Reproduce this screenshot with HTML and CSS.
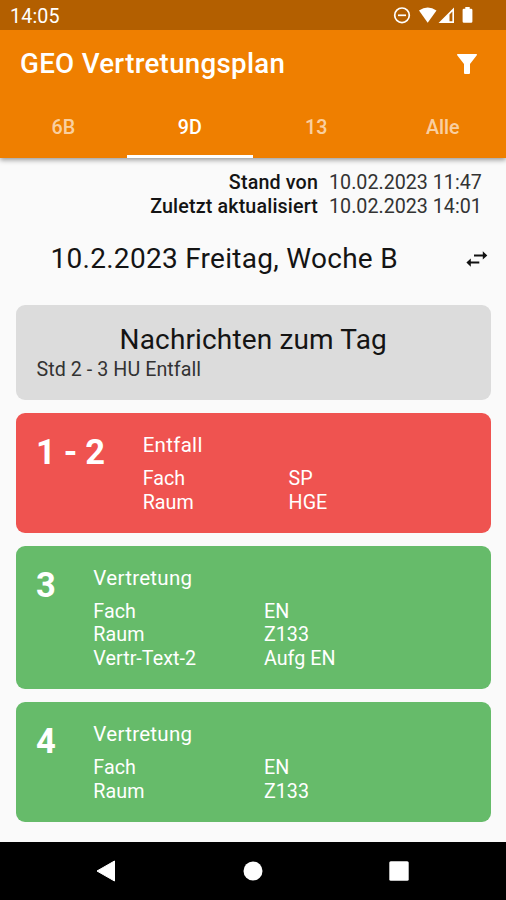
FILE: index.html
```html
<!DOCTYPE html>
<html lang="de">
<head>
<meta charset="utf-8">
<title>GEO Vertretungsplan</title>
<link rel="stylesheet" href="styles.css">
</head>
<body>
<header class="top">
  <div class="status">
    <span class="clock">14:05</span>
    <svg class="status-icons" width="82" height="20" viewBox="0 0 82 20">
      <g fill="none" stroke="#fff" stroke-width="1.7"><circle cx="9" cy="10.3" r="7.3"/><path d="M5 10.3h8"/></g>
      <path fill="#fff" d="M26 5.400Q34.700 -.6 43.500 5.400L34.700 17.700Z"/>
      <path fill="#fff" fill-rule="evenodd" d="M45.500 18 61 2.500V18ZM56.500 9.500V16.300H59.400V6.600Z"/>
      <path fill="#fff" d="M72.300 1.900h4.400v1.800h1.400q1.300 0 1.300 1.300v11.500q0 1.300-1.300 1.300h-7.200q-1.300 0-1.300-1.300V5q0-1.300 1.300-1.300h1.400Z"/>
    </svg>
  </div>
  <div class="appbar">
    <h1 class="title">GEO Vertretungsplan</h1>
    <svg class="filter" width="20" height="20" viewBox="0 0 20 20"><path fill="#fff" d="M.6 0H19.400Q20.500.6 19.600 1.600L13 10V19q0 1-1 1H8q-1 0-1-1V10L.4 1.600Q-.5.6.6 0Z"/></svg>
  </div>
  <nav class="tabs">
    <span class="tab">6B</span>
    <span class="tab active">9D</span>
    <span class="tab">13</span>
    <span class="tab">Alle</span>
  </nav>
</header>
<main class="content">
  <div class="stamps">
    <b>Stand von</b><span>10.02.2023 11:47</span>
    <b>Zuletzt aktualisiert</b><span>10.02.2023 14:01</span>
  </div>
  <div class="day">
    <h2 class="date">10.2.2023 Freitag, Woche B</h2>
    <svg class="swap" width="22" height="16" viewBox="0 0 22 16"><path fill="#111" d="M8 3.400H16.800V.2L21.300 4.400 16.800 8.600V5.400H8ZM13.300 10.600H4.800V7.400L.4 11.600 4.800 15.800V12.600H13.300Z"/></svg>
  </div>
  <section class="card news">
    <h3 class="news-title">Nachrichten zum Tag</h3>
    <p class="news-text">Std 2 - 3 HU Entfall</p>
  </section>
  <section class="card red">
    <div class="hour">1 - 2</div>
    <div class="info">
      <div class="kind">Entfall</div>
      <div class="rows"><span>Fach</span><span>SP</span><span>Raum</span><span>HGE</span></div>
    </div>
  </section>
  <section class="card green">
    <div class="hour">3</div>
    <div class="info">
      <div class="kind">Vertretung</div>
      <div class="rows"><span>Fach</span><span>EN</span><span>Raum</span><span>Z133</span><span>Vertr-Text-2</span><span>Aufg EN</span></div>
    </div>
  </section>
  <section class="card green">
    <div class="hour">4</div>
    <div class="info">
      <div class="kind">Vertretung</div>
      <div class="rows"><span>Fach</span><span>EN</span><span>Raum</span><span>Z133</span></div>
    </div>
  </section>
</main>
<footer class="navbar">
  <svg width="20" height="22" viewBox="0 0 20 22"><path fill="#fff" d="M18.500 1V21L1 11Z" stroke="#fff" stroke-width="1" stroke-linejoin="round"/></svg>
  <svg width="20" height="20" viewBox="0 0 20 20"><circle cx="10" cy="10" r="9.500" fill="#fff"/></svg>
  <svg width="20" height="20" viewBox="0 0 20 20"><rect x=".3" y=".3" width="19.400" height="19.400" rx="1.500" fill="#fff"/></svg>
</footer>
</body>
</html>
```
FILE: styles.css
```css
* { box-sizing: border-box; }
body {
  margin: 0;
  width: 506px;
  height: 900px;
  overflow: hidden;
  display: flex;
  flex-direction: column;
  background: #fafafa;
  color: #141414;
  font-family: Roboto, "Liberation Sans", sans-serif;
  font-size: 19.7px;
  line-height: 23.5px;
}
h1, h2, h3, p { margin: 0; font-weight: 400; }
svg { display: block; flex: none; }
.top {
  height: 158px;
  flex: none;
  background: #ef7f00;
  color: #fff;
  box-shadow: 0 2px 5px rgba(0, 0, 0, .4);
}
.status {
  height: 30px;
  padding: 4px 31px 0 10px;
  background: #b35f00;
  display: flex;
  justify-content: space-between;
  align-items: center;
}
.status-icons { margin-top: -5px; }
.clock { font-size: 19.7px; font-weight: 400; letter-spacing: .15px; }
.appbar {
  height: 68px;
  padding: 0 29px 0 20px;
  display: flex;
  justify-content: space-between;
  align-items: center;
}
.title { font-size: 27.7px; line-height: 34px; font-weight: 500; letter-spacing: .3px; }
.tabs { height: 60px; display: grid; grid-template-columns: repeat(4, 1fr); }
.tab {
  padding-top: 18px;
  text-align: center;
  font-size: 19.7px;
  font-weight: 500;
  color: rgba(255, 255, 255, .65);
}
.active { color: #fff; border-bottom: 3px solid #fff; }
.content { flex: 1; padding: 13px 15.5px 0 16px; }
.stamps {
  display: grid;
  grid-template-columns: 1fr 153px;
  column-gap: 11px;
  padding-right: 8.5px;
}
.stamps b { font-weight: 500; text-align: right; letter-spacing: .15px; }
.stamps span { color: #333; white-space: nowrap; }
.day {
  height: 86.5px;
  padding: 0 3px 4px 34.5px;
  display: flex;
  justify-content: space-between;
  align-items: center;
}
.date { font-size: 28px; line-height: 34px; letter-spacing: .28px; }
.card { border-radius: 9px; margin-bottom: 13px; padding: 20.5px; }
.news { height: 95.5px; background: #dcdcdc; padding-top: 18.5px; }
.news-title { font-size: 28px; line-height: 34px; text-align: center; letter-spacing: .15px; }
.news-text { color: #333; padding-top: 1px; letter-spacing: .05px; }
.red, .green { display: flex; color: #fff; padding: 20px 56px 19.3px 20px; }
.red { background: #ef5350; }
.green { background: #66bb6a; }
.hour { font-size: 34.5px; line-height: 39px; font-weight: 700; white-space: nowrap; letter-spacing: -.3px; }
.info { flex: 1; margin-left: 37.8px; }
.kind { font-size: 20.5px; line-height: 24px; margin-bottom: 10.2px; letter-spacing: .3px; }
.rows { display: grid; grid-template-columns: 1fr 1fr; margin-bottom: -.7px; letter-spacing: .05px; }
.navbar {
  height: 58px;
  flex: none;
  background: #000;
  display: flex;
  justify-content: space-between;
  align-items: center;
  padding: 0 97px 0 96px;
}
```
